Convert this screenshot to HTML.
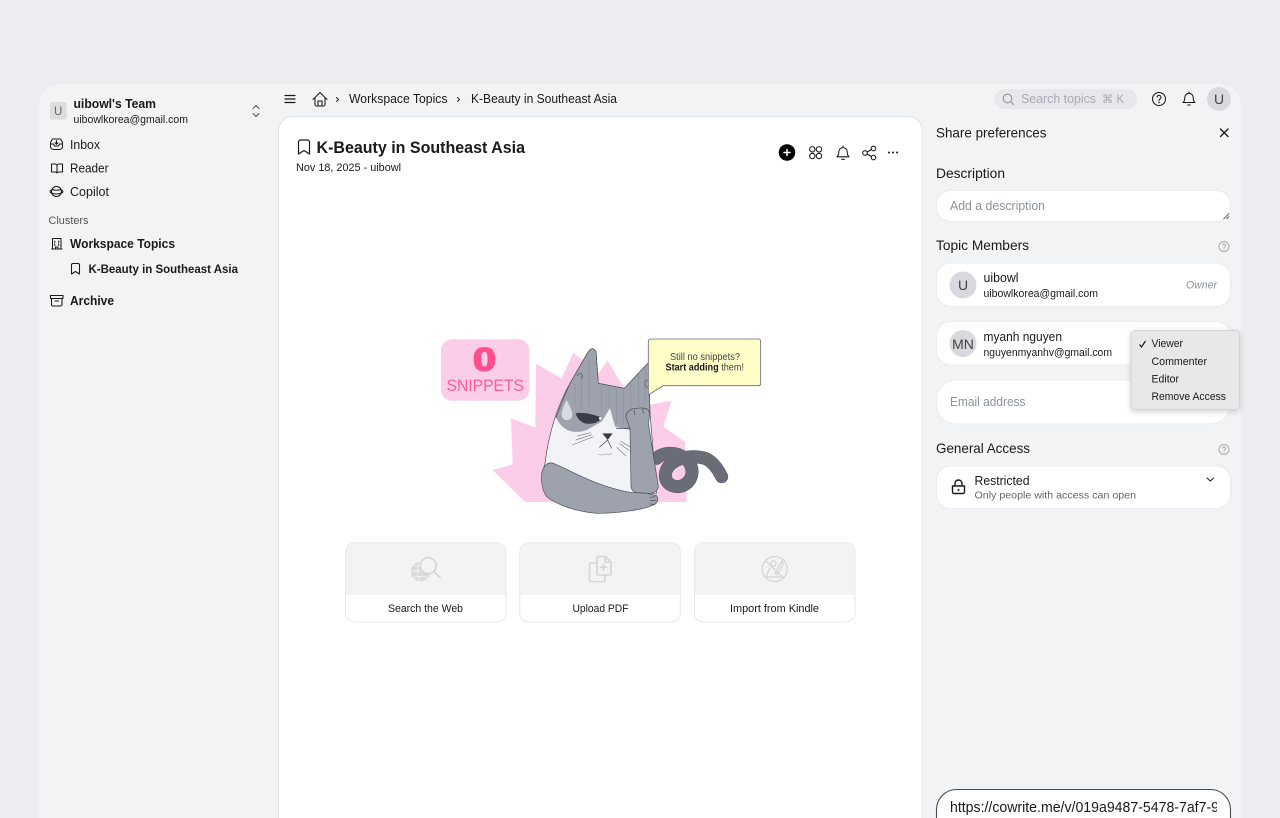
<!DOCTYPE html>
<html lang="en"><head><meta charset="utf-8"><title>K-Beauty in Southeast Asia</title>
<style>
html,body{margin:0;padding:0;width:1280px;height:818px;overflow:hidden;background:#ecedf1}
svg{display:block;position:absolute;left:0;top:0}
text{font-family:"Liberation Sans",sans-serif;fill:#1a1a1c;white-space:pre}
.b{font-weight:700}
.ic{fill:none;stroke:#1a1a1c;stroke-width:1.05;stroke-linecap:round;stroke-linejoin:round}
.g{fill:none;stroke:#d3d5d9;stroke-width:1.6;stroke-linecap:round;stroke-linejoin:round}
.o{stroke:#4a4d58;stroke-width:2;stroke-linejoin:round;stroke-linecap:round}
</style></head><body>
<svg width="1280" height="818" viewBox="0 0 1280 818" xmlns="http://www.w3.org/2000/svg">
<defs><filter id="sh" x="-20%" y="-20%" width="140%" height="150%"><feDropShadow dx="0" dy="2" stdDeviation="3" flood-color="#000" flood-opacity=".16"/></filter></defs>

<!-- app shell -->
<rect x="39" y="84" width="1202" height="760" rx="20" fill="#f2f3f5"/>
<rect x="278.5" y="116.5" width="643.5" height="740" rx="14" fill="#fff" stroke="#e2e3e6"/>

<!-- sidebar -->
<rect x="50" y="102" width="16.5" height="17.5" rx="2" fill="#dcdde1"/>
<text x="58.2" y="115" font-size="11.5" text-anchor="middle" style="fill:#666">U</text>
<text class="b" x="73.5" y="108" font-size="13" textLength="82.5" lengthAdjust="spacingAndGlyphs">uibowl's Team</text>
<text x="73.5" y="123" font-size="11" textLength="114.5" lengthAdjust="spacingAndGlyphs">uibowlkorea@gmail.com</text>
<path class="ic" style="stroke-width:.9;stroke:#444" d="M253 108.500l3-3 3 3M253 113.500l3 3 3-3"/>

<path class="ic" d="M50.500 146v-3.500l2-3.500h8l2 3.500v3.500a3 3 0 01-3 3.500h-6a3 3 0 01-3-3.500zM50.500 144h3l1 2h4l1-2h3M56.500 140.500v3.500M55 142.800l1.500 1.500 1.500-1.500"/>
<text x="70" y="149" font-size="13" textLength="30" lengthAdjust="spacingAndGlyphs">Inbox</text>
<path class="ic" d="M51.500 164h3.500a2 2 0 012 2v7a2 2 0 00-2-1h-3.500zM62.500 164H59a2 2 0 00-2 2v7a2 2 0 012-1h3.500z"/>
<text x="70" y="172.500" font-size="13" textLength="38.500" lengthAdjust="spacingAndGlyphs">Reader</text>
<ellipse class="ic" cx="56.500" cy="191.500" rx="5" ry="5"/><path class="ic" d="M51.500 190c-2 1-1.700 2.500 0 3 3 1.200 7 1.200 10 0 1.700-.5 2-2 0-3M52 189.500c2.500 1 6.500 1 9 0"/>
<text x="70" y="196" font-size="13" textLength="39" lengthAdjust="spacingAndGlyphs">Copilot</text>
<text x="48.500" y="224" font-size="11" textLength="40" lengthAdjust="spacingAndGlyphs" style="fill:#555">Clusters</text>
<path class="ic" d="M52.500 238.500h8.500v10.500h-8.500zM51.500 249h10.500M54.800 241v1.500M58.700 241v1.500M54.800 244v1.500M58.700 244v1.500M55.500 249v-2h2.500v2"/>
<text class="b" x="70" y="248" font-size="13" textLength="105" lengthAdjust="spacingAndGlyphs">Workspace Topics</text>
<path class="ic" d="M71.500 265a1.500 1.500 0 011.500-1.500h5a1.500 1.500 0 011.500 1.500v9l-4-2.500-4 2.500z"/>
<text class="b" x="88.500" y="273" font-size="12" textLength="149.500" lengthAdjust="spacingAndGlyphs">K-Beauty in Southeast Asia</text>
<path class="ic" d="M50.500 295.500h12.500v3h-12.500zM51.500 298.500v6a1.500 1.500 0 001.500 1.500h7.500a1.500 1.500 0 001.500-1.500v-6M55 301h3.500"/>
<text class="b" x="70" y="305" font-size="13" textLength="44" lengthAdjust="spacingAndGlyphs">Archive</text>

<!-- top bar -->
<path class="ic" style="stroke-width:1.300" d="M285 95.500h10M285 99h10M285 102.500h10"/>
<path class="ic" d="M313 99.500l7-7 7 7M315 97.500v7a1.500 1.500 0 001.500 1.500h7a1.500 1.500 0 001.500-1.500v-7M318 106v-5h4v5"/>
<path class="ic" style="stroke-width:.9" d="M336.500 97.500l2 2-2 2M457.500 97.500l2 2-2 2"/>
<text x="349" y="103" font-size="12.500" textLength="98.500" lengthAdjust="spacingAndGlyphs">Workspace Topics</text>
<text x="471" y="103" font-size="12.500" textLength="146" lengthAdjust="spacingAndGlyphs">K-Beauty in Southeast Asia</text>
<rect x="994.500" y="89" width="142.500" height="20" rx="10" fill="#e7e8eb"/>
<circle cx="1007.500" cy="98.500" r="4.300" class="ic" style="stroke:#8f9299"/><path class="ic" style="stroke:#8f9299" d="M1010.800 101.800l2.700 2.700"/>
<text x="1021" y="103" font-size="12.500" textLength="75" lengthAdjust="spacingAndGlyphs" style="fill:#a7aab0">Search topics</text>
<text x="1102" y="103" font-size="11.500" textLength="22" lengthAdjust="spacingAndGlyphs" style="fill:#a7aab0">⌘ K</text>
<circle class="ic" cx="1159" cy="99" r="6.500"/><path class="ic" d="M1157 97.200a2 2 0 113 1.800c-.7.400-1 .8-1 1.500"/><circle cx="1159" cy="102.400" r=".8" fill="#1a1a1c"/>
<path class="ic" d="M1183 102.500c1.200-1 1.800-2.500 1.800-5a4.200 4.200 0 018.400 0c0 2.500.6 4 1.800 5zM1189 92v1.300M1187.700 105h2.600"/>
<circle cx="1219" cy="99" r="12" fill="#d8d9de"/>
<text x="1219" y="104" font-size="14" text-anchor="middle" style="fill:#444">U</text>

<!-- title -->
<path class="ic" style="stroke-width:1.200" d="M298.500 142a2 2 0 012-2h7a2 2 0 012 2v12l-5.500-3.500-5.500 3.500z"/>
<text class="b" x="316.500" y="153" font-size="17" textLength="208.500" lengthAdjust="spacingAndGlyphs">K-Beauty in Southeast Asia</text>
<text x="296" y="171" font-size="11" textLength="105" lengthAdjust="spacingAndGlyphs">Nov 18, 2025 - uibowl</text>

<circle cx="787" cy="152.500" r="8.300" fill="#000"/><path d="M784 152.500h6M787 149.500v6" stroke="#fff" stroke-width="1.500" stroke-linecap="round"/>
<g class="ic"><circle cx="812.300" cy="149.300" r="2.700"/><circle cx="819" cy="149.300" r="2.700"/><circle cx="812.300" cy="156" r="2.700"/><circle cx="819" cy="156" r="2.700"/></g>
<path class="ic" d="M837 156.800c1.200-1 1.800-2.500 1.800-5a4.200 4.200 0 018.400 0c0 2.500.6 4 1.800 5zM843 146v1.500M841.700 159.300h2.600"/>
<g class="ic"><circle cx="865" cy="153" r="2.300"/><circle cx="873.500" cy="148.500" r="2.300"/><circle cx="873.500" cy="157.500" r="2.300"/><path d="M867 152l4.500-2.500M867 154l4.500 2.500"/></g>
<g fill="#1a1a1c"><circle cx="889" cy="152.500" r="1"/><circle cx="893" cy="152.500" r="1"/><circle cx="897" cy="152.500" r="1"/></g>

<!-- illustration -->
<rect x="441" y="339.300" width="88.300" height="61.400" rx="11" fill="#fbcde8"/>
<text class="b" x="473" y="370.500" font-size="32" textLength="23" lengthAdjust="spacingAndGlyphs" style="fill:#ff4f8e;stroke:#ff4f8e;stroke-width:1.600">0</text>
<text x="446.500" y="391" font-size="17" textLength="77.500" lengthAdjust="spacingAndGlyphs" style="fill:#ff5c94">SNIPPETS</text>

<g transform="translate(430 330) scale(.33333)">
<polygon fill="#fbcde8" points="188,420 248,403 243,265 316,293 318,102 395,145 430,68 480,110 505,130 533,92 580,170 640,170 655,225 725,212 700,290 765,335 770,516 285,516"/>
<path d="M680 385C700 365 740 365 765 385C800 410 790 465 745 470C710 470 695 440 715 410C740 380 790 375 825 385C850 395 865 420 875 440" fill="none" stroke="#55586a" stroke-width="39" stroke-linecap="round"/>
<path d="M680 385C700 365 740 365 765 385C800 410 790 465 745 470C710 470 695 440 715 410C740 380 790 375 825 385C850 395 865 420 875 440" fill="none" stroke="#6a6d77" stroke-width="36" stroke-linecap="round"/>
<path class="o" fill="#f2f3f6" d="M345 400C355 320 375 240 420 160L472 70Q487 45 498 65L505 160L583 175L655 98L660 250L680 490L600 490L340 420Z"/>
<path fill="#9ea2ad" d="M378 262C395 215 420 160 420 160L472 70Q487 45 498 65L505 160L583 175L655 98L660 240L600 300L555 290L540 235L515 275L470 300C430 315 395 300 378 262Z"/>
<path class="o" fill="none" d="M378 262C395 215 420 160 420 160L472 70Q487 45 498 65L505 160L583 175L655 98L660 250"/>
<g stroke="#8f93a0" stroke-width="2.500" fill="none"><path d="M478 90V225M455 125V230M435 160V225M515 170V240M538 170V232M560 175V280M580 180V285M602 160V240M625 135V230M645 112V225"/></g>
<path d="M441 138a8 8 0 1 1 12 8" fill="none" stroke="#4a4d58" stroke-width="1.800"/>
<path d="M654 150a8 9 0 0 0 0 22" fill="none" stroke="#4a4d58" stroke-width="1.800"/>
<path fill="#d9dadd" d="M410 210C420 230 432 250 425 262C415 278 393 270 395 250C397 235 405 220 410 210Z"/>
<path fill="#3a3d47" d="M437 250C460 245 495 255 515 262C510 275 490 285 465 280C450 275 440 262 437 250Z"/>
<circle cx="511" cy="265" r="4" fill="#fff"/>
<path d="M558 295H600" stroke="#4a4d58" stroke-width="2.500"/>
<polygon fill="#3a3d47" points="517,310 548,310 533,330"/>
<path d="M533 330L508 352M533 330L545 355" stroke="#3a3d47" stroke-width="2" fill="none"/>
<path d="M442 318L482 308M427 345L490 320M437 330L486 314M568 340L598 362M560 352L588 378M572 333L602 352" stroke="#7b7e88" stroke-width="2" fill="none"/>
<path d="M505 372q12 6 20 0q10 5 20-3" stroke="#9a9ea8" stroke-width="2" fill="none"/>
<path class="o" fill="#9ea2ad" d="M590 268C582 250 600 235 620 235C640 232 655 235 657 245C662 260 655 270 655 280L685 470Q680 492 650 490L620 488Q603 485 603 465L600 295Z"/>
<path d="M612 240L615 255M638 235L640 252" stroke="#4a4d58" stroke-width="2" fill="none"/>
<path class="o" fill="#9ea2ad" d="M335 430C340 405 355 395 370 400C420 420 500 470 600 487L650 490L680 497Q690 515 670 525C640 540 560 550 500 550C440 545 380 525 350 500C335 480 333 450 335 430Z"/>
<path d="M660 502L676 500M660 512L680 512M660 522L675 524" stroke="#4a4d58" stroke-width="2" fill="none"/>
<path fill="#fffec9" stroke="#6a6d76" stroke-width="2.500" stroke-linejoin="round" d="M655 35Q655 27 663 27H985Q992 27 992 35V160Q992 167 985 167H700L655 195Z"/>
</g>
<text x="670" y="360" font-size="10" textLength="70" lengthAdjust="spacingAndGlyphs" style="fill:#444">Still no snippets?</text>
<text x="665.500" y="370.500" font-size="10" textLength="78.500" lengthAdjust="spacingAndGlyphs" style="fill:#444"><tspan class="b" style="fill:#1a1a1c">Start adding</tspan> them!</text>

<!-- action cards -->
<g>
<rect x="345.500" y="542.500" width="160.500" height="79.500" rx="9" fill="#fff" stroke="#e8e9ec"/>
<path d="M346 595V551.500a9 9 0 019-9h141.500a9 9 0 019 9V595z" fill="#f2f3f5"/>
<rect x="519.800" y="542.500" width="160.500" height="79.500" rx="9" fill="#fff" stroke="#e8e9ec"/>
<path d="M520.300 595V551.500a9 9 0 019-9h141.500a9 9 0 019 9V595z" fill="#f2f3f5"/>
<rect x="694.500" y="542.500" width="160.500" height="79.500" rx="9" fill="#fff" stroke="#e8e9ec"/>
<path d="M695 595V551.500a9 9 0 019-9h141.500a9 9 0 019 9V595z" fill="#f2f3f5"/>
</g>
<circle cx="420.500" cy="571.500" r="9.800" fill="#d8dade"/>
<path d="M411 571h19M420 562c-3 6-3 13 0 19M413 565c4 2 11 2 15 0M413 578c4-2 11-2 15 0" fill="none" stroke="#f2f3f5" stroke-width=".9"/>
<g class="g"><circle cx="428.300" cy="565.700" r="8" style="fill:#f2f3f5"/><path d="M434 571.500l6 6"/></g>
<g class="g"><path d="M596 563h-5a1.500 1.500 0 00-1.500 1.500v15.500a1.500 1.500 0 001.500 1.500h12.500a1.500 1.500 0 001.500-1.500v-5"/><path d="M598.500 556.500h7l5.500 5.500v11.500a1.500 1.500 0 01-1.500 1.500h-11a1.500 1.500 0 01-1.500-1.500v-15.500a1.500 1.500 0 011.500-1.500zM605 557v5h5.500M603.500 564v6.500M600.300 567.200h6.500"/></g>
<g class="g" style="stroke-width:1.300"><circle cx="774.700" cy="569" r="12.500"/><path d="M765.500 560.500l18.500 18M771 563.500a2.500 2.500 0 105 0 2.500 2.500 0 10-5 0M770 568c-2 3-3 6-3 9h15M782 561l-7 12 2 2 6-11z"/></g>
<text x="388" y="612" font-size="11" textLength="75" lengthAdjust="spacingAndGlyphs">Search the Web</text>
<text x="572.500" y="612" font-size="11" textLength="56" lengthAdjust="spacingAndGlyphs">Upload PDF</text>
<text x="730" y="612" font-size="11" textLength="89" lengthAdjust="spacingAndGlyphs">Import from Kindle</text>

<!-- share panel -->
<text x="936" y="137.500" font-size="14" textLength="110.500" lengthAdjust="spacingAndGlyphs">Share preferences</text>
<path class="ic" style="stroke-width:1.400" d="M1220.500 129l7.500 7.500M1228 129l-7.500 7.500"/>
<text x="936" y="178" font-size="14" textLength="69" lengthAdjust="spacingAndGlyphs">Description</text>
<rect x="936.500" y="190.500" width="294" height="31" rx="14" fill="#fff" stroke="#ebecef"/>
<text x="950" y="210" font-size="12.500" textLength="95" lengthAdjust="spacingAndGlyphs" style="fill:#8d9199">Add a description</text>
<path d="M1223.500 219l5.500-5.500M1226.500 219l2.500-2.500" stroke="#666" stroke-width=".9"/>

<text x="936" y="250" font-size="14" textLength="93" lengthAdjust="spacingAndGlyphs">Topic Members</text>
<g fill="none" stroke="#a9abb1" stroke-width="1"><circle cx="1224" cy="246.500" r="5"/><path d="M1222.500 245.300a1.500 1.500 0 112.300 1.300c-.5.300-.8.600-.8 1.100"/></g><circle cx="1224" cy="249.200" r=".6" fill="#a9abb1"/>

<rect x="936.500" y="263" width="294" height="43.500" rx="14" fill="#fff" stroke="#ebecef"/>
<circle cx="963" cy="285" r="13.500" fill="#d8d9de"/>
<text x="963" y="290" font-size="14" text-anchor="middle" style="fill:#444">U</text>
<text x="983.500" y="282" font-size="12.500" textLength="35" lengthAdjust="spacingAndGlyphs">uibowl</text>
<text x="983.500" y="297" font-size="11" textLength="114.500" lengthAdjust="spacingAndGlyphs">uibowlkorea@gmail.com</text>
<text x="1186" y="288.500" font-size="11" font-style="italic" textLength="31" lengthAdjust="spacingAndGlyphs" style="fill:#8d9199">Owner</text>

<rect x="936.500" y="321.500" width="294" height="43.500" rx="14" fill="#fff" stroke="#ebecef"/>
<circle cx="963" cy="343.500" r="13.500" fill="#d8d9de"/>
<text x="963" y="349" font-size="14" text-anchor="middle" style="fill:#444">MN</text>
<text x="983.500" y="341" font-size="12.500" textLength="78.500" lengthAdjust="spacingAndGlyphs">myanh nguyen</text>
<text x="983.500" y="356" font-size="11" textLength="128.500" lengthAdjust="spacingAndGlyphs">nguyenmyanhv@gmail.com</text>

<rect x="936.500" y="380" width="294" height="44" rx="20" fill="#fff" stroke="#ebecef"/>
<text x="950" y="406" font-size="12.500" textLength="75.500" lengthAdjust="spacingAndGlyphs" style="fill:#8d9199">Email address</text>

<rect x="1131" y="330.500" width="108.500" height="79" rx="4" fill="#e7e8e7" stroke="#d2d3d2" style="filter:url(#sh)"/>
<path d="M1139.500 344.500l2 2.500 4-6" fill="none" stroke="#1a1a1c" stroke-width="1.200"/>
<text x="1151.500" y="347" font-size="11" textLength="31.500" lengthAdjust="spacingAndGlyphs">Viewer</text>
<text x="1151.500" y="365" font-size="11" textLength="55.500" lengthAdjust="spacingAndGlyphs">Commenter</text>
<text x="1151.500" y="382.500" font-size="11" textLength="27.500" lengthAdjust="spacingAndGlyphs">Editor</text>
<text x="1151.500" y="400" font-size="11" textLength="74.500" lengthAdjust="spacingAndGlyphs">Remove Access</text>

<text x="936" y="453" font-size="14" textLength="94" lengthAdjust="spacingAndGlyphs">General Access</text>
<g fill="none" stroke="#a9abb1" stroke-width="1"><circle cx="1224" cy="449.500" r="5"/><path d="M1222.500 448.300a1.500 1.500 0 112.300 1.300c-.5.300-.8.600-.8 1.100"/></g><circle cx="1224" cy="452.200" r=".6" fill="#a9abb1"/>
<rect x="936.500" y="466" width="294" height="42.500" rx="14" fill="#fff" stroke="#ebecef"/>
<path class="ic" style="stroke-width:1.400" d="M952.500 486h12v6a1.500 1.500 0 01-1.500 1.500h-9a1.500 1.500 0 01-1.500-1.500zM955 486v-2.500a3.500 3.500 0 017 0v2.500"/><circle cx="958.500" cy="490" r="1" fill="#1a1a1c"/>
<text x="974.500" y="485" font-size="12.500" textLength="55" lengthAdjust="spacingAndGlyphs">Restricted</text>
<text x="974.500" y="498.500" font-size="10.500" textLength="161.500" lengthAdjust="spacingAndGlyphs" style="fill:#666">Only people with access can open</text>
<path class="ic" d="M1207 478l3.300 3 3.300-3"/>

<rect x="936.500" y="789.500" width="294" height="50" rx="20" fill="#fff" stroke="#4a4c53" stroke-width="1.100"/>
<svg x="945" y="790" width="272" height="28" viewBox="945 790 272 28">
<text x="950" y="812" font-size="14.500" style="fill:#1a1a1c" textLength="269" lengthAdjust="spacingAndGlyphs">https://cowrite.me/v/019a9487-5478-7af7-9</text>
</svg>
</svg>
</body></html>
